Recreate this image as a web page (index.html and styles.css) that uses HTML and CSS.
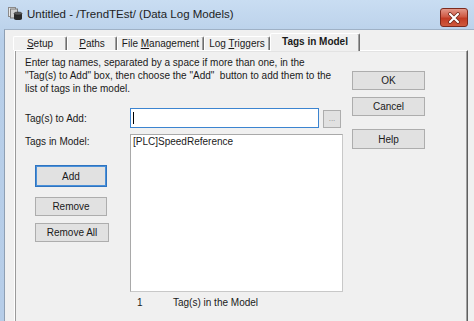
FILE: index.html
```html
<!DOCTYPE html>
<html lang="en">
<head>
    <meta charset="UTF-8">
    <title>Untitled - /TrendTEst/ (Data Log Models)</title>
    <link rel="stylesheet" href="styles.css">
</head>
<body>
    <div class="window">
        <div class="titlebar">
            <svg class="app-icon" viewBox="0 0 15 13" xmlns="http://www.w3.org/2000/svg">
                <rect x="0.5" y="0.5" width="7" height="9" fill="#e8e8e8" stroke="#8a8a8a"/>
                <rect x="2.5" y="2" width="7" height="9" fill="#d0d0d0" stroke="#7a7a7a"/>
                <path d="M6 6.5 v5 a4 1.5 0 0 0 8 0 v-5 z" fill="#2a2a2a"/>
                <ellipse cx="10" cy="6.5" rx="4" ry="1.5" fill="#5a5a5a" stroke="#1a1a1a" stroke-width="0.5"/>
            </svg>
            <span class="title">Untitled - /TrendTEst/ (Data Log Models)</span>
            <div class="close-btn">
                <svg viewBox="0 0 14 12" xmlns="http://www.w3.org/2000/svg">
                    <path d="M3 2 L11 10 M11 2 L3 10" stroke="#6b2418" stroke-width="3.6" stroke-linecap="round"/>
                    <path d="M3 2 L11 10 M11 2 L3 10" stroke="#ffffff" stroke-width="2.2" stroke-linecap="round"/>
                </svg>
            </div>
        </div>

        <div class="client">
            <div class="tabs">
                <div class="tab" style="width: 54px"><u>S</u>etup</div>
                <div class="tab" style="width: 50px"><u>P</u>aths</div>
                <div class="tab" style="width: 87px">File <u>M</u>anagement</div>
                <div class="tab" style="width: 66px">Log <u>T</u>riggers</div>
                <div class="tab active" style="width: 90px">Tags in Model</div>
            </div>

            <div class="panel">
                <div class="main">
                    <p class="desc">Enter tag names, separated by a space if more than one, in the "Tag(s) to Add" box, then choose the "Add"&nbsp; button to add them to the list of tags in the model.</p>

                    <div class="field-row">
                        <label class="label" for="tagInput">Tag(s) to Add:</label>
                        <div class="tag-input" id="tagInput"><span class="caret"></span></div>
                        <button class="btn browse">...</button>
                    </div>

                    <div class="list-row">
                        <div class="list-left">
                            <div class="label">Tags in Model:</div>
                            <div class="left-buttons">
                                <button class="btn btn-add">Add</button>
                                <button class="btn btn-remove">Remove</button>
                                <button class="btn btn-remove-all">Remove All</button>
                            </div>
                        </div>
                        <div class="tag-list">
                            <div class="tag-item">[PLC]SpeedReference</div>
                        </div>
                    </div>

                    <div class="footer">
                        <span class="count">1</span>
                        <span>Tag(s) in the Model</span>
                    </div>
                </div>

                <div class="side">
                    <button class="btn btn-ok">OK</button>
                    <button class="btn btn-cancel">Cancel</button>
                    <button class="btn btn-help">Help</button>
                </div>
            </div>
        </div>
    </div>
</body>
</html>
```

FILE: styles.css
```css
:root {
    --frame-blue: #bcd3ec;
    --face: #f0f0f0;
    --text: #1a1a1a;
    --btn-face: #e1e1e1;
    --btn-border: #adadad;
    --focus-blue: #3c84d0;
}

* {
    margin: 0;
    padding: 0;
    box-sizing: border-box;
}

body {
    font-family: 'Liberation Sans', Arial, sans-serif;
    font-size: 10px;
    color: var(--text);
    background: var(--frame-blue);
}

.window {
    width: 474px;
    height: 321px;
    overflow: hidden;
    background: linear-gradient(#c9ddf2, #b8cfe9 40px, #b6cde8);
    padding-left: 4px;
}

/* title bar */
.titlebar {
    height: 29px;
    display: flex;
    align-items: center;
    padding: 0 6px 2px 4px;
}

.app-icon {
    width: 15px;
    height: 13px;
    margin-right: 4px;
}

.title {
    font-size: 11.5px;
    color: #1e1e1e;
    flex-grow: 1;
}

.close-btn {
    width: 28px;
    height: 19px;
    align-self: flex-start;
    margin-top: 8px;
    border: 1px solid #7d2a1e;
    border-radius: 3px;
    background: linear-gradient(#e3988a, #cf5a45 45%, #c23b24 55%, #cf5a3e);
    display: flex;
    align-items: center;
    justify-content: center;
}

.close-btn svg {
    width: 14px;
    height: 12px;
}

/* dialog body */
.client {
    height: 292px;
    background: var(--face);
    border-left: 1px solid #8e9fb3;
    border-top: 1px solid #9fb1c6;
    padding: 3px 0 0 9px;
}

.tabs {
    display: flex;
    align-items: flex-end;
    height: 17px;
    margin-left: -1px;
    position: relative;
    z-index: 1;
}

.tab {
    height: 14px;
    text-align: center;
    line-height: 13px;
    background: var(--face);
    border-top: 1px solid #ffffff;
    border-left: 1px solid #ffffff;
    border-right: 1px solid #6e6e6e;
    border-radius: 2px 2px 0 0;
    box-shadow: inset -1px 0 0 #a0a0a0;
    white-space: nowrap;
}

.tab.active {
    height: 18px;
    margin-bottom: -1px;
    font-weight: bold;
    line-height: 16px;
}

.panel {
    width: 454px;
    height: 275px;
    display: flex;
    border-top: 1px solid #ffffff;
    border-left: 1px solid #ffffff;
    border-right: 1px solid #5f5f5f;
    box-shadow: inset 1px 0 0 #9a9a9a, inset -1px 0 0 #a0a0a0, inset 0 1px 0 #e3e3e3;
    padding: 5px 0 0 10px;
}

.main {
    width: 318px;
}

.desc {
    line-height: 13px;
    width: 312px;
}

.label {
    width: 105px;
    line-height: 13px;
}

.field-row {
    display: flex;
    align-items: center;
    height: 20px;
    margin-top: 13px;
}

.tag-input {
    width: 189px;
    height: 20px;
    background: #ffffff;
    border: 1px solid var(--focus-blue);
    padding: 3px 0 0 2px;
}

.caret {
    display: block;
    width: 1px;
    height: 12px;
    background: #000000;
}

.btn {
    font-family: inherit;
    font-size: 10px;
    color: var(--text);
    background: var(--btn-face);
    border: 1px solid var(--btn-border);
    display: block;
}

.browse {
    width: 18px;
    height: 18px;
    margin-left: 4px;
    align-self: flex-end;
    color: #8a8a8a;
    font-size: 8px;
    line-height: 10px;
}

.list-row {
    display: flex;
    margin-top: 6px;
}

.list-left {
    width: 105px;
    padding-top: 1px;
}

.left-buttons {
    margin-top: 17px;
    padding-left: 10px;
}

.btn-add {
    width: 72px;
    height: 22px;
    border-color: #2f74c0;
    box-shadow: inset 0 0 0 1px #4a90d9;
}

.btn-remove {
    width: 72px;
    height: 19px;
    margin-top: 10px;
}

.btn-remove-all {
    width: 74px;
    height: 19px;
    margin-top: 7px;
}

.tag-list {
    width: 213px;
    height: 158px;
    background: #ffffff;
    border: 1px solid #a9a9a9;
    border-right-color: #c8c8c8;
    border-bottom-color: #c8c8c8;
    padding: 1px 2px;
}

.tag-item {
    line-height: 12px;
}

.footer {
    display: flex;
    margin-top: 4px;
    padding-left: 112px;
    line-height: 13px;
}

.count {
    width: 36px;
}

.side {
    margin-left: 9px;
    padding-top: 15px;
}

.btn-ok,
.btn-cancel,
.btn-help {
    width: 73px;
}

.btn-ok {
    height: 19px;
}

.btn-cancel {
    height: 19px;
    margin-top: 7px;
}

.btn-help {
    height: 20px;
    margin-top: 13px;
}
```
